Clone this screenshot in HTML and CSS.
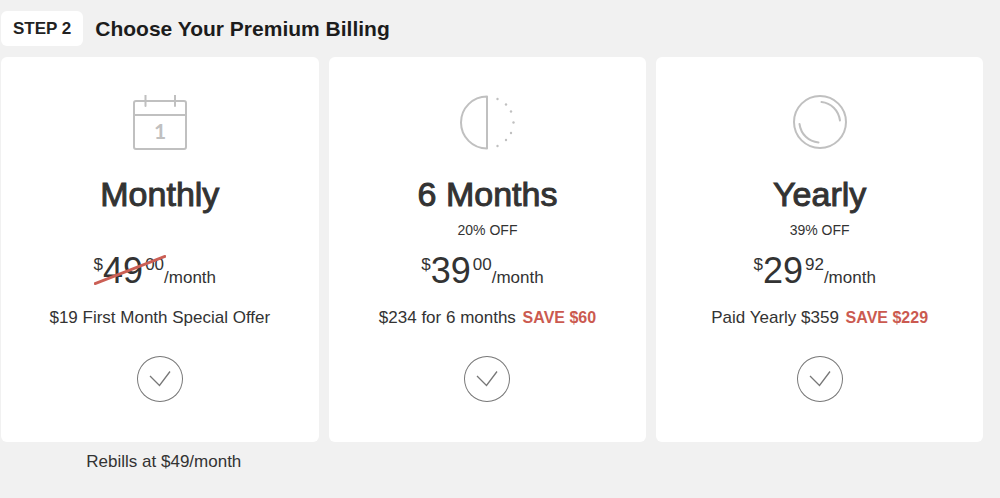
FILE: index.html
```html
<!DOCTYPE html>
<html lang="en">
<head>
  <meta charset="UTF-8" />
  <meta name="viewport" content="width=device-width, initial-scale=1.0" />
  <title>Choose Your Premium Billing</title>
  <link rel="stylesheet" href="styles.css">
</head>
<body>
  <header class="step-header">
    <span class="step">STEP 2</span>
    <h1>Choose Your Premium Billing</h1>
  </header>

  <main class="plans">
    <!-- Monthly -->
    <section class="plan">
      <div class="card">
        <svg class="icon" viewBox="0 0 56 56" aria-hidden="true">
          <rect x="2" y="6" width="52" height="48" rx="2" />
          <path d="M2 20H54M13.5 0V11M43 0V11" />
          <text x="28" y="44">1</text>
        </svg>
        <h2>Monthly</h2>
        <p class="discount"></p>
        <p class="price">
          <span class="amount"><span class="small">$</span><span class="big">49</span><span class="small cents">00</span><svg class="strike" viewBox="0 0 72 30" aria-hidden="true"><path d="M0 29L72 1" /></svg></span><span class="per">/month</span>
        </p>
        <p class="offer">$19 First Month Special Offer</p>
        <button class="select" type="button" aria-label="Monthly">
          <svg viewBox="0 0 46 46" aria-hidden="true"><path d="M13 20L22.5 29.5L33 15.5" /></svg>
        </button>
      </div>
      <p class="note">Rebills at $49/month</p>
    </section>

    <!-- 6 months -->
    <section class="plan">
      <div class="card">
        <svg class="icon" viewBox="0 0 56 56" aria-hidden="true">
          <path d="M28 1.500V53.500A26 26 0 0 1 28 1.500Z" />
          <g class="dots">
            <circle cx="38.5" cy="4" r="1.2" />
            <circle cx="47" cy="9.5" r="1.2" />
            <circle cx="52" cy="16.5" r="1.2" />
            <circle cx="54.5" cy="27.5" r="1.2" />
            <circle cx="52" cy="38" r="1.2" />
            <circle cx="47" cy="45" r="1.2" />
            <circle cx="38.5" cy="51" r="1.2" />
          </g>
        </svg>
        <h2>6 Months</h2>
        <p class="discount">20% OFF</p>
        <p class="price">
          <span class="amount"><span class="small">$</span><span class="big">39</span><span class="small cents">00</span></span><span class="per">/month</span>
        </p>
        <p class="offer">$234 for 6 months <strong>SAVE $60</strong></p>
        <button class="select" type="button" aria-label="6 Months">
          <svg viewBox="0 0 46 46" aria-hidden="true"><path d="M13 20L22.5 29.5L33 15.5" /></svg>
        </button>
      </div>
    </section>

    <!-- Yearly -->
    <section class="plan">
      <div class="card">
        <svg class="icon" viewBox="0 0 56 56" aria-hidden="true">
          <circle cx="28" cy="27" r="26" />
          <path d="M29.500 7C39 8 46.500 15 48 25.500M7.500 29C9 39.500 16.500 46.500 26.500 47.500" />
        </svg>
        <h2>Yearly</h2>
        <p class="discount">39% OFF</p>
        <p class="price">
          <span class="amount"><span class="small">$</span><span class="big">29</span><span class="small cents">92</span></span><span class="per">/month</span>
        </p>
        <p class="offer">Paid Yearly $359 <strong>SAVE $229</strong></p>
        <button class="select" type="button" aria-label="Yearly">
          <svg viewBox="0 0 46 46" aria-hidden="true"><path d="M13 20L22.5 29.5L33 15.5" /></svg>
        </button>
      </div>
    </section>
  </main>
</body>
</html>
```

FILE: styles.css
```css
* {
  margin: 0;
  padding: 0;
  box-sizing: border-box;
}

body {
  font-family: "Liberation Sans", Arial, sans-serif;
  font-size: 17px;
  line-height: 20px;
  color: #333;
  background: #f1f1f1;
  padding: 11px 17px 11px 1px;
}

.step-header {
  display: flex;
  align-items: center;
  gap: 12px;
  margin-bottom: 11px;
}

.step {
  padding: 8px 12px;
  border-radius: 6px;
  background: #fff;
  color: #222;
  font-weight: bold;
  line-height: 19px;
}

h1 {
  font-size: 21px;
  line-height: 24px;
  color: #1c1c1c;
}

.plans {
  display: grid;
  grid-template-columns: 318fr 318fr 327fr;
  gap: 10px;
}

.card {
  display: flex;
  flex-direction: column;
  align-items: center;
  padding: 38px 10px 40px;
  border-radius: 6px;
  background: #fff;
}

.icon {
  width: 56px;
  height: 56px;
  fill: none;
  stroke: #c0c0c0;
  stroke-width: 2;
  stroke-linecap: round;
  stroke-linejoin: round;
}

.icon text {
  font-family: Lato, sans-serif;
  font-size: 21px;
  font-weight: bold;
  text-anchor: middle;
  fill: #c0c0c0;
  stroke: none;
}

.icon .dots {
  fill: #c0c0c0;
  stroke: none;
}

/* medium weight */
h2 {
  margin-top: 23px;
  font-size: 34px;
  line-height: 40px;
  font-weight: normal;
  -webkit-text-stroke: 1px #333;
}

.discount {
  min-height: 16px;
  margin-top: 8px;
  font-size: 14px;
  line-height: 16px;
}

.price {
  display: flex;
  align-items: flex-end;
  height: 40px;
  margin-top: 13px;
  padding-right: 10px;
}

.amount {
  position: relative;
  display: flex;
  align-items: flex-start;
}

.small {
  padding-top: 4px;
}

.cents {
  padding-left: 2px;
}

.big {
  font-size: 36px;
  line-height: 40px;
}

.per {
  padding-bottom: 3px;
}

.strike {
  position: absolute;
  left: 0;
  top: 4px;
  width: 72px;
  height: 30px;
  fill: none;
  stroke: #cb5f55;
  stroke-width: 3;
}

.offer {
  margin-top: 17px;
}

.offer strong {
  margin-left: 2px;
  font-size: 16px;
  color: #cb5a50;
}

.select {
  width: 46px;
  height: 46px;
  margin-top: 28px;
  border: none;
  border-radius: 50%;
  background: none;
  box-shadow: inset 0 0 0 1px #777;
  cursor: pointer;
}

.select svg {
  display: block;
  fill: none;
  stroke: #777;
  stroke-width: 1.3;
}

.note {
  margin-top: 10px;
  padding-left: 8px;
  text-align: center;
}

@media (max-width: 768px) {
  .plans {
    grid-template-columns: 1fr;
  }
}
```
